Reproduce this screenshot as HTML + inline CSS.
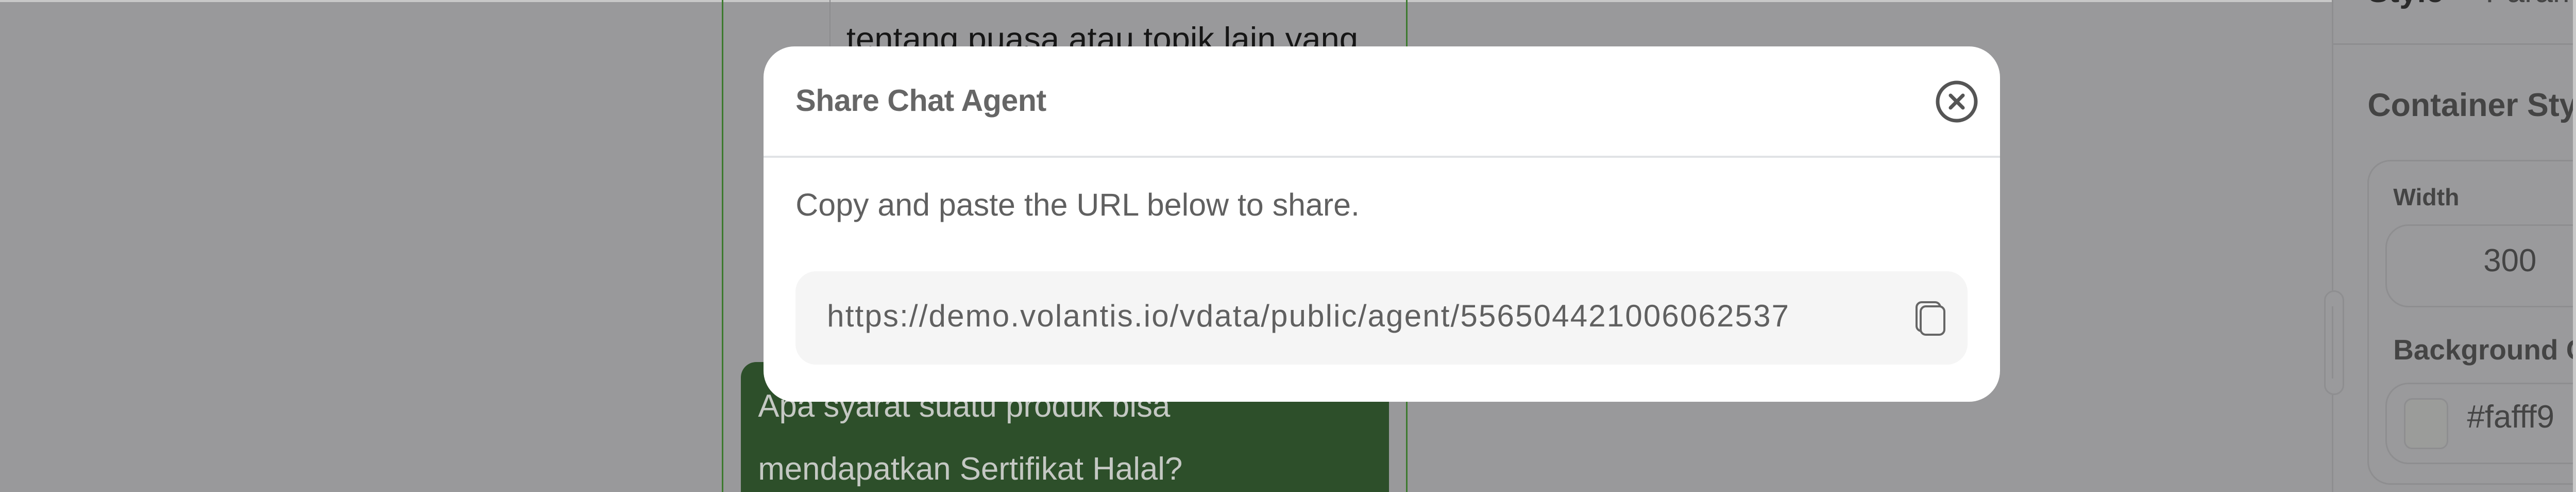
<!DOCTYPE html>
<html><head><meta charset="utf-8"><style>
*{margin:0;padding:0;box-sizing:border-box}
:root{--u:calc(100vw / 5828)}
html,body{width:100%;height:100%;overflow:hidden}
body{background:#99999b;font-family:"Liberation Sans",Arial,sans-serif}
#w{position:relative;width:100vw;height:954px;overflow:hidden}
.a{position:absolute}
</style></head><body><div id="w">
<div class="a" style="left:0;top:0;width:100%;height:4px;background:#c8c8c8"></div>
<div class="a" style="left:calc(1633*var(--u));top:0;width:3px;height:954px;background:#3d7a2f"></div>
<div class="a" style="left:calc(3181*var(--u));top:0;width:3px;height:954px;background:#3d7a2f"></div>
<div class="a" style="left:calc(1877*var(--u));top:0;width:2px;height:700px;background:#8c8c8e"></div>
<div class="a" style="left:calc(1915*var(--u));top:38px;font-size:calc(76*var(--u));color:#161616;white-space:nowrap">tentang puasa atau topik lain yang</div>
<div class="a" style="left:calc(1676*var(--u));top:702px;width:calc(1466*var(--u));height:252px;background:#2d4f2a;border-radius:30px 30px 0 0"></div>
<div class="a" style="left:calc(1715*var(--u));top:727px;font-size:calc(72*var(--u));color:#c4c8c3;line-height:122px;white-space:nowrap">Apa syarat suatu produk bisa<br>mendapatkan Sertifikat Halal?</div>

<div class="a" style="left:calc(5276*var(--u));top:0;width:calc(552*var(--u));height:954px;background:#9a9a9c;border-left:3px solid #8e8e90;overflow:hidden">
<div class="a" style="left:0;top:84px;width:100%;height:3px;background:#8e8e90"></div>
<div class="a" style="left:calc(77*var(--u));top:-52px;font-size:calc(72*var(--u));font-weight:bold;color:#2a2a2a">Style</div>
<div class="a" style="left:calc(344*var(--u));top:-52px;font-size:calc(72*var(--u));color:#444">Param</div>
<div class="a" style="left:calc(77*var(--u));top:168px;font-size:calc(73*var(--u));font-weight:bold;color:#444;white-space:nowrap">Container Style</div>
<div class="a" style="left:calc(77*var(--u));top:310px;width:calc(600*var(--u));height:630px;border:3px solid #8e8e90;border-radius:45px"></div>
<div class="a" style="left:calc(135*var(--u));top:355px;font-size:calc(54*var(--u));font-weight:bold;color:#444">Width</div>
<div class="a" style="left:calc(117*var(--u));top:435px;width:calc(600*var(--u));height:161px;border:3px solid #8e8e90;border-radius:45px"></div>
<div class="a" style="left:calc(339*var(--u));top:470px;font-size:calc(72*var(--u));color:#444">300</div>
<div class="a" style="left:calc(135*var(--u));top:646px;font-size:calc(64*var(--u));font-weight:bold;color:#444;white-space:nowrap">Background Co</div>
<div class="a" style="left:calc(117*var(--u));top:742px;width:calc(600*var(--u));height:158px;border:3px solid #8e8e90;border-radius:45px"></div>
<div class="a" style="left:calc(159*var(--u));top:772px;width:calc(100*var(--u));height:99px;border:3px solid #8e8e90;border-radius:16px;background:#9b9c9a"></div>
<div class="a" style="left:calc(302*var(--u));top:773px;font-size:calc(72*var(--u));color:#444">#fafff9</div>
</div>
<div class="a" style="left:calc(5258*var(--u));top:563px;width:39px;height:203px;border:3px solid #8e8e90;border-radius:20px;background:#9a9a9c"></div>
<div class="a" style="left:calc(5276*var(--u));top:594px;width:3px;height:140px;background:#8e8e90"></div>
<div class="a" style="right:0;top:0;width:6px;height:954px;background:#c8c8c8"></div>

<div class="a" style="left:calc(1727*var(--u));top:90px;width:calc(2798*var(--u));height:689px;background:#fff;border-radius:60px"></div>
<div class="a" style="left:calc(1800*var(--u));top:160px;font-size:calc(69*var(--u));font-weight:bold;color:#666;white-space:nowrap;letter-spacing:-0.5px">Share Chat Agent</div>
<svg class="a" style="left:calc(4378*var(--u));top:155px" width="84" height="84" viewBox="0 0 84 84">
<circle cx="42" cy="42" r="37" fill="none" stroke="#555" stroke-width="7"/>
<path d="M30 30 L54 54 M54 30 L30 54" stroke="#555" stroke-width="7" stroke-linecap="round"/></svg>
<div class="a" style="left:calc(1727*var(--u));top:302px;width:calc(2798*var(--u));height:4px;background:#e1e3e6"></div>
<div class="a" style="left:calc(1800*var(--u));top:362px;font-size:calc(71*var(--u));color:#606060;white-space:nowrap">Copy and paste the URL below to share.</div>
<div class="a" style="left:calc(1800*var(--u));top:526px;width:calc(2652*var(--u));height:181px;background:#f5f5f5;border-radius:40px"></div>
<div class="a" style="left:calc(1871*var(--u));top:578px;font-size:calc(70*var(--u));color:#606060;white-space:nowrap;letter-spacing:calc(2.5*var(--u))">https://demo.volantis.io/vdata/public/agent/556504421006062537</div>
<svg class="a" style="left:calc(4330*var(--u));top:582px" width="64" height="70" viewBox="0 0 64 70">
<rect x="5" y="4" width="46" height="56" rx="10" fill="none" stroke="#666" stroke-width="4"/>
<rect x="13" y="12" width="46" height="55" rx="10" fill="#f5f5f5" stroke="#666" stroke-width="4"/></svg>
</div></body></html>
